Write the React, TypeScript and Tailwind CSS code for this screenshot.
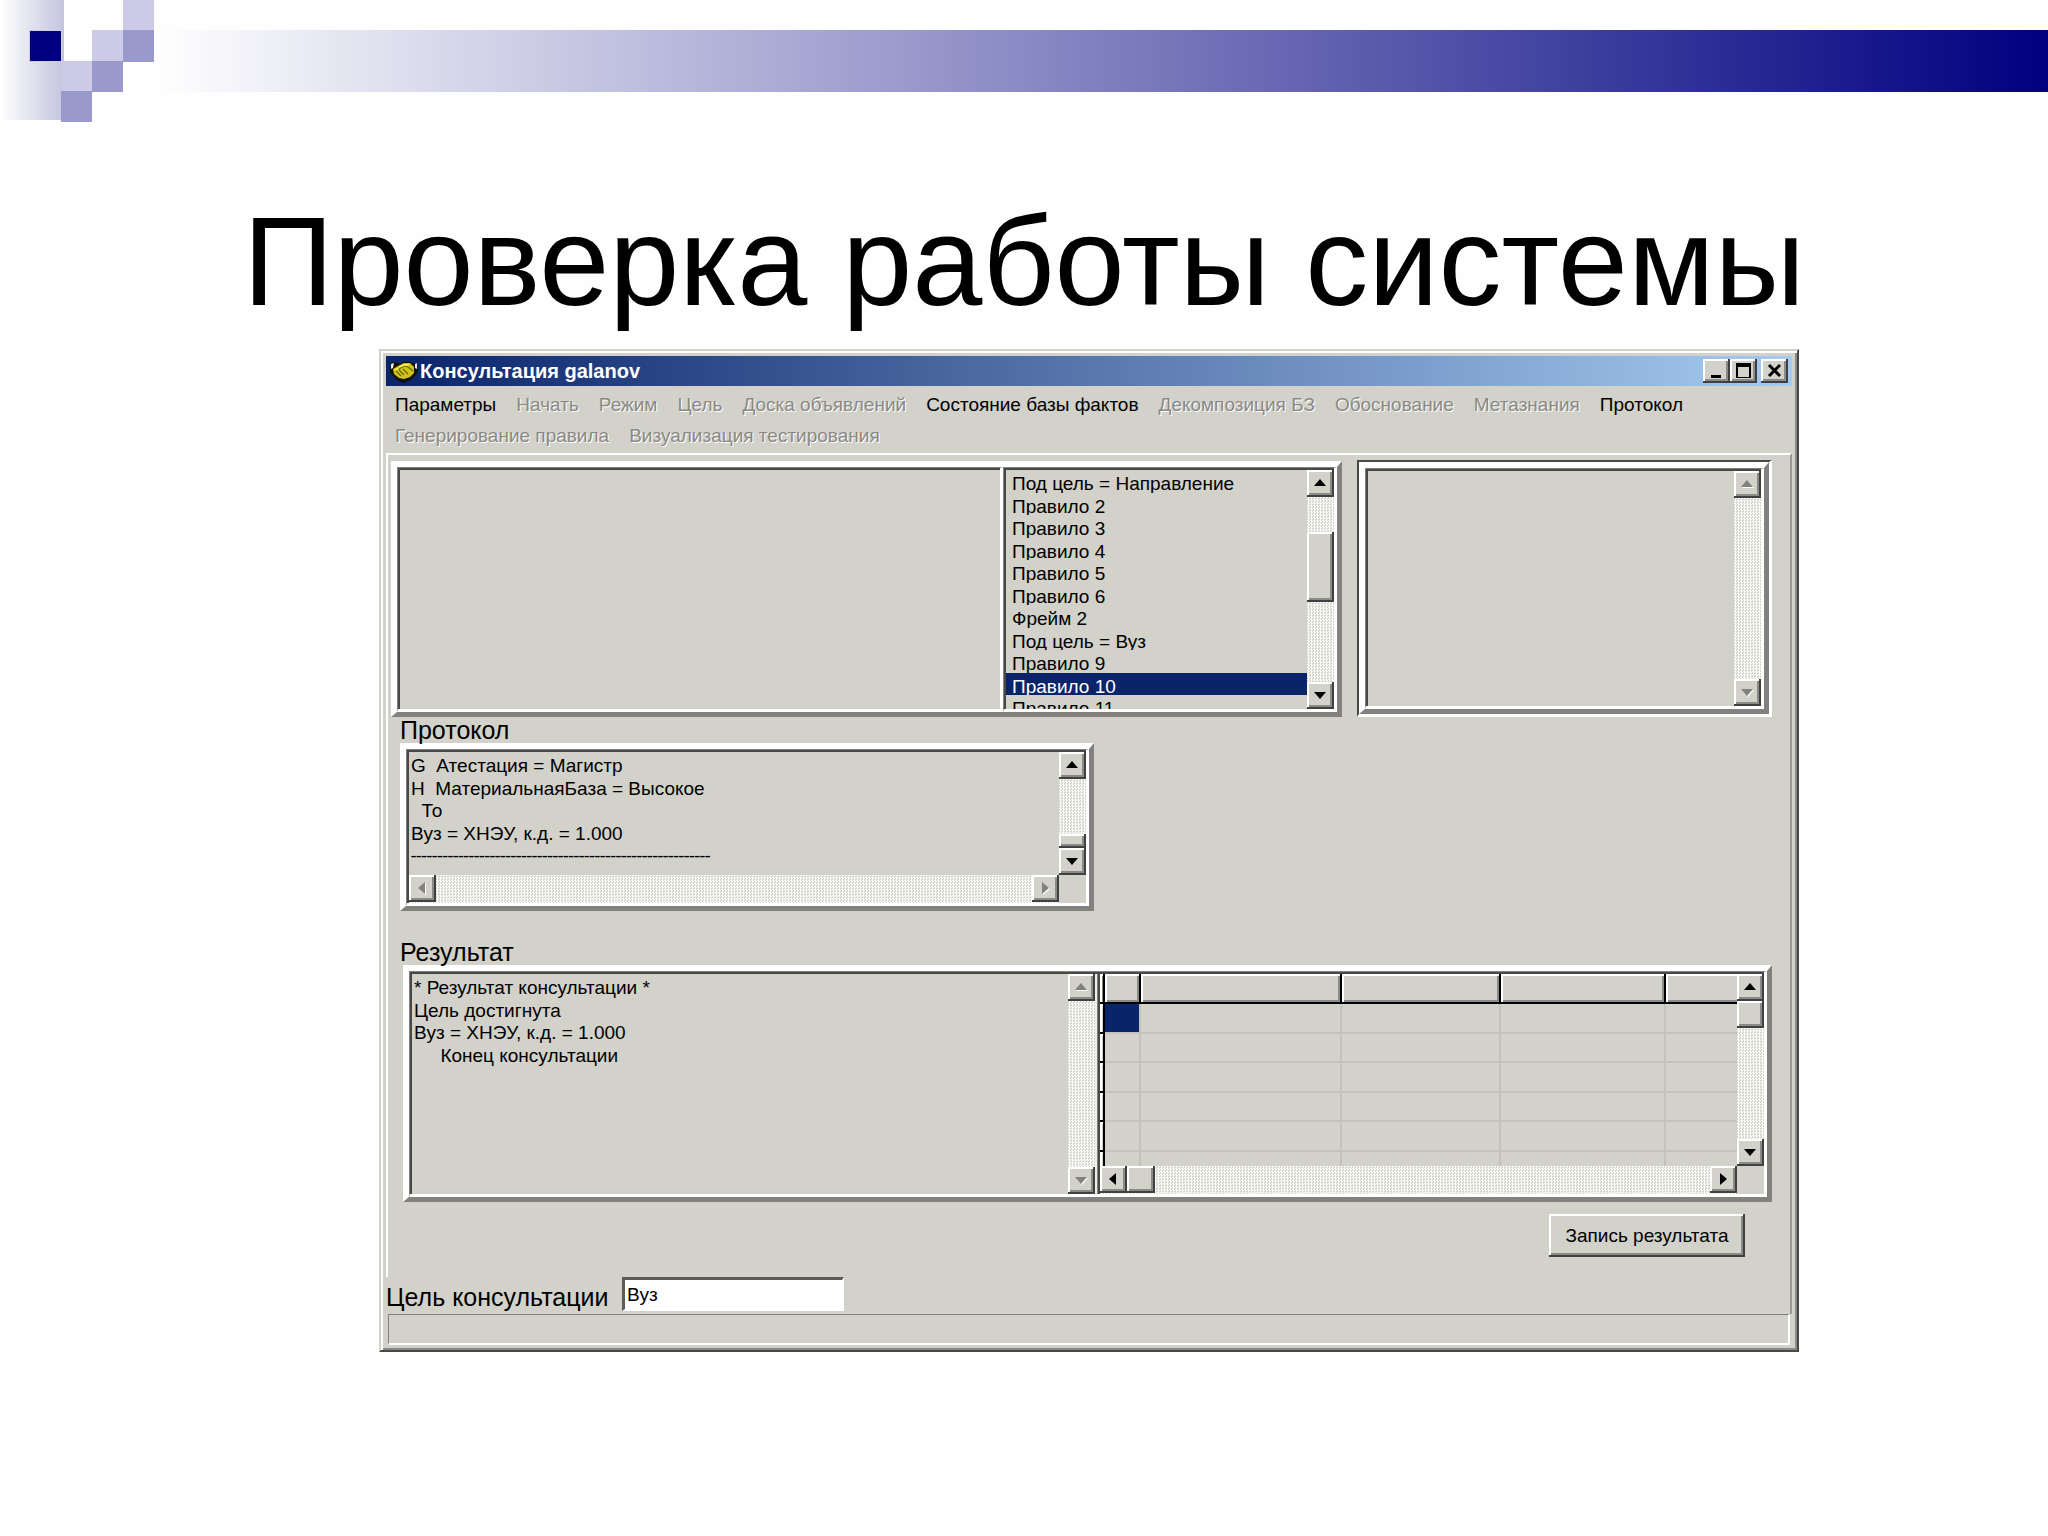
import type { ReactNode } from "react";

// ── Types ───────────────────────────────────────────────────────────────────

type Direction = "up" | "down" | "left" | "right";

interface MenuItem {
  label: string;
  disabled?: boolean;
}

// ── Data ────────────────────────────────────────────────────────────────────

const MENU: MenuItem[] = [
  { label: "Параметры" },
  { label: "Начать", disabled: true },
  { label: "Режим", disabled: true },
  { label: "Цель", disabled: true },
  { label: "Доска объявлений", disabled: true },
  { label: "Состояние базы фактов" },
  { label: "Декомпозиция БЗ", disabled: true },
  { label: "Обоснование", disabled: true },
  { label: "Метазнания", disabled: true },
  { label: "Протокол" },
  { label: "Генерирование правила", disabled: true },
  { label: "Визуализация тестирования", disabled: true },
];

const RULES = [
  "Под цель = Направление",
  "Правило 2",
  "Правило 3",
  "Правило 4",
  "Правило 5",
  "Правило 6",
  "Фрейм 2",
  "Под цель = Вуз",
  "Правило 9",
  "Правило 10",
  "Правило 11",
];

const SELECTED_RULE = "Правило 10";

const PROTOCOL = [
  "G  Атестация = Магистр",
  "H  МатериальнаяБаза = Высокое",
  "  То",
  "Вуз = ХНЭУ, к.д. = 1.000",
];

const RESULT = [
  "* Результат консультации *",
  "Цель достигнута",
  "Вуз = ХНЭУ, к.д. = 1.000",
  "     Конец консультации",
];

const ARROWS: Record<Direction, string> = {
  up: "M6 2 L12 9 H0 Z",
  down: "M0 3 H12 L6 10 Z",
  left: "M9 0 V12 L2 6 Z",
  right: "M3 0 L10 6 L3 12 Z",
};

const ARROW_LABELS: Record<Direction, string> = {
  up: "Вверх",
  down: "Вниз",
  left: "Влево",
  right: "Вправо",
};

const RAISED =
  "bg-[#d2d1ca] shadow-[inset_-2px_-2px_0_#404040,inset_2px_2px_0_#ffffff,inset_-4px_-4px_0_#8a8a86]";

const TRACK =
  "bg-[repeating-conic-gradient(#fbfbf8_0_25%,#d4d3cc_0_50%)] bg-[length:3px_3px]";

// ── Bevels ──────────────────────────────────────────────────────────────────

function Frame({ className = "", children }: { className?: string; children: ReactNode }) {
  return (
    <div
      className={`flex border-t-[6px] border-l-[6px] border-r-[5px] border-b-[5px] border-t-white border-l-white border-r-[#82817d] border-b-[#82817d] ${className}`}
    >
      {children}
    </div>
  );
}

function Sunken({ className = "", children }: { className?: string; children?: ReactNode }) {
  return (
    <div className={`flex border-t border-l border-r-[3px] border-b-[3px] border-t-[#82817d] border-l-[#82817d] border-r-white border-b-white ${className}`}>
      <div className="flex min-w-0 flex-1 border-t-2 border-l-2 border-[#484846]">{children}</div>
    </div>
  );
}

// ── Scroll bars ─────────────────────────────────────────────────────────────

function ArrowButton({ dir, disabled = false }: { dir: Direction; disabled?: boolean }) {
  return (
    <button
      type="button"
      disabled={disabled}
      aria-label={ARROW_LABELS[dir]}
      className={`flex size-[27px] shrink-0 items-center justify-center ${RAISED}`}
    >
      <svg viewBox="0 0 13 13" className="size-[13px]">
        {disabled && <path d={ARROWS[dir]} fill="#ffffff" transform="translate(1 1)" />}
        <path d={ARROWS[dir]} fill={disabled ? "#82817d" : "#000000"} />
      </svg>
    </button>
  );
}

function VScroll({ disabled = false, children }: { disabled?: boolean; children?: ReactNode }) {
  return (
    <div className={`flex w-[27px] shrink-0 flex-col ${TRACK}`}>
      <ArrowButton dir="up" disabled={disabled} />
      <div className="flex flex-1 flex-col">{children}</div>
      <ArrowButton dir="down" disabled={disabled} />
    </div>
  );
}

function HScroll({ disabled = false, children }: { disabled?: boolean; children?: ReactNode }) {
  return (
    <div className="flex h-[28px] shrink-0">
      <div className={`flex flex-1 ${TRACK}`}>
        <ArrowButton dir="left" disabled={disabled} />
        <div className="flex flex-1">{children}</div>
        <ArrowButton dir="right" disabled={disabled} />
      </div>
      <div className="w-[27px]" />
    </div>
  );
}

// ── Slide decoration ────────────────────────────────────────────────────────

function SlideHeader() {
  return (
    <header className="flex h-[122px] items-start">
      <svg viewBox="0 0 154 122" className="h-[122px] w-[154px] shrink-0">
        <defs>
          <linearGradient id="fade" x1="0" x2="1" y1="0" y2="0">
            <stop offset="0" stopColor="#ffffff" />
            <stop offset="1" stopColor="#c4c4de" />
          </linearGradient>
        </defs>
        <rect x="0" y="0" width="64" height="120" fill="url(#fade)" />
        <rect x="29" y="30" width="33" height="32" fill="#cccce6" />
        <rect x="30" y="31" width="31" height="30" fill="#000080" />
        <rect x="123" y="0" width="31" height="30" fill="#cccae6" />
        <rect x="92" y="30" width="31" height="31" fill="#cccae6" />
        <rect x="62" y="61" width="30" height="31" fill="#cccae6" />
        <rect x="123" y="30" width="31" height="32" fill="#9999cc" />
        <rect x="92" y="61" width="31" height="31" fill="#9999cc" />
        <rect x="61" y="91" width="31" height="31" fill="#9999cc" />
      </svg>
      <div className="mt-[30px] h-[62px] flex-1 bg-linear-to-r/srgb from-white to-[#000080]" />
    </header>
  );
}

// ── Window chrome ───────────────────────────────────────────────────────────

function HandshakeIcon() {
  return (
    <svg viewBox="0 0 28 24" className="h-[24px] w-[28px] shrink-0">
      <path d="M1 4 L5 3 L10 5 L14 3 L20 3 L24 5 L27 3 L28 12 L25 17 L21 21 L14 24 L8 22 L3 17 L0 13 Z" fill="#12120a" />
      <path d="M1 5 L4 4 L3 9 L1 10 Z M25 5 L27 4 L27 10 L25 9 Z" fill="#e8e8e0" />
      <path d="M3 10 L8 7 L14 4 L20 4 L24 8 L24 14 L20 18 L14 20 L9 19 L4 15 Z" fill="#cfc41a" />
      <path d="M9 10 L14 7 L18 8 L23 12 M6 12 L11 17 M9 11 L14 16 M13 10 L18 15" fill="none" stroke="#6a640c" strokeWidth="1.2" />
      <path d="M9 8 L14 6 L19 6 M5 11 L8 9" fill="none" stroke="#fff65a" strokeWidth="1.4" />
    </svg>
  );
}

function TitleBar() {
  const button = `flex h-[24px] w-[27px] items-center justify-center ${RAISED}`;
  return (
    <div className="flex h-[30px] items-center bg-linear-to-r/srgb from-[#0a246a] to-[#a6caf0] pr-1 pl-1">
      <HandshakeIcon />
      <h2 className="ml-0.5 flex-1 text-[20px] leading-[30px] font-bold text-white">Консультация galanov</h2>
      <button type="button" aria-label="Свернуть" className={button}>
        <svg viewBox="0 0 17 16" className="h-[16px] w-[17px]">
          <rect x="3" y="12" width="10" height="3" />
        </svg>
      </button>
      <button type="button" aria-label="Развернуть" className={button}>
        <svg viewBox="0 0 17 16" className="h-[16px] w-[17px]">
          <path d="M1 0 H16 V15 H1 Z M3 4 V14 H14 V4 Z" fillRule="evenodd" />
        </svg>
      </button>
      <button type="button" aria-label="Закрыть" className={`ml-1 ${button}`}>
        <svg viewBox="0 0 17 16" className="h-[16px] w-[17px]">
          <path d="M3 2 L14 13 M14 2 L3 13" stroke="#000000" strokeWidth="3" />
        </svg>
      </button>
    </div>
  );
}

function MenuBar() {
  return (
    <nav className="flex flex-wrap gap-x-[20px] pt-[3px] pr-[60px] pb-[2px] pl-[9px]">
      {MENU.map((item) => (
        <button
          key={item.label}
          type="button"
          disabled={item.disabled}
          className={[
            "text-[19px] leading-[31px] whitespace-nowrap",
            item.disabled ? "text-[#8a8984] [text-shadow:1px_1px_0_#ffffff]" : "text-black",
          ].join(" ")}
        >
          {item.label}
        </button>
      ))}
    </nav>
  );
}

// ── Panels ──────────────────────────────────────────────────────────────────

function RulesPanel() {
  return (
    <Frame className="h-[256px] min-w-0 flex-1">
      <Sunken className="min-w-0 flex-1" />
      <Sunken className="w-[334px] shrink-0">
        <div className="min-w-0 flex-1 overflow-hidden">
          <ul role="listbox" aria-label="Правила" className="flex h-[248px] flex-col">
            {RULES.map((rule) => (
              <li
                key={rule}
                role="option"
                aria-selected={rule === SELECTED_RULE}
                className={[
                  "min-h-0 flex-1 overflow-hidden pl-[6px] text-[19px] leading-[28px] whitespace-nowrap",
                  rule === SELECTED_RULE ? "bg-[#0a246a] text-white" : "",
                ].join(" ")}
              >
                {rule}
              </li>
            ))}
          </ul>
        </div>
        <VScroll>
          <div className={`mt-[35px] h-[70px] ${RAISED}`} />
        </VScroll>
      </Sunken>
    </Frame>
  );
}

function EmptyPanel() {
  return (
    <div className="flex h-[257px] w-[415px] shrink-0 border-t-2 border-l-2 border-r-[3px] border-b-[3px] border-t-[#484846] border-l-[#484846] border-r-white border-b-white">
      <Frame className="flex-1">
        <Sunken className="flex-1">
          <div className="flex-1" />
          <VScroll disabled />
        </Sunken>
      </Frame>
    </div>
  );
}

function ProtocolPanel() {
  return (
    <Frame className="ml-[12px] h-[168px] w-[694px]">
      <Sunken className="flex-1">
        <div className="flex min-w-0 flex-1 flex-col">
          <div className="flex min-h-0 flex-1">
            <div role="log" aria-labelledby="protocol" className="flex-1 overflow-hidden pt-[3px] pl-[2px]">
              <div className="flex h-[113px] flex-col">
                {PROTOCOL.map((line) => (
                  <p key={line} className="min-h-0 flex-1 text-[19px] leading-[22px] whitespace-pre">
                    {line}
                  </p>
                ))}
                <p className="min-h-0 flex-1 font-[Roboto,sans-serif] text-[19px] leading-[22px] whitespace-pre">
                  {"-".repeat(57)}
                </p>
              </div>
            </div>
            <VScroll>
              <div className={`mt-auto h-[14px] ${RAISED}`} />
            </VScroll>
          </div>
          <HScroll disabled />
        </div>
      </Sunken>
    </Frame>
  );
}

function ResultGrid() {
  const head = "border-r-2 border-b-2 border-black p-0 shadow-[inset_2px_2px_0_#ffffff,inset_-2px_-2px_0_#8a8a86]";
  const cell = "border-r-2 border-b-2 border-[#c3c2bc] p-0";
  return (
    <div className="flex w-[667px] shrink-0 border-l border-[#82817d]">
      <div className="flex min-w-0 flex-1 flex-col border-l-2 border-[#484846]">
        <div className="flex min-h-0 flex-1">
          <div className="min-w-0 flex-1 overflow-hidden">
            <table aria-label="Таблица результатов" className="h-[207px] w-full table-fixed border-separate border-spacing-0">
              <colgroup>
                <col className="w-[5px]" />
                <col className="w-[36px]" />
                <col className="w-[201px]" />
                <col className="w-[159px]" />
                <col className="w-[165px]" />
                <col />
              </colgroup>
              <thead>
                <tr className="h-[30px]">
                  <th className={head} />
                  <th className={head} />
                  <th className={head} />
                  <th className={head} />
                  <th className={head} />
                  <th className="border-b-2 border-black p-0 shadow-[inset_2px_2px_0_#ffffff,inset_0_-2px_0_#8a8a86]" />
                </tr>
              </thead>
              <tbody>
                {[0, 1, 2, 3, 4, 5].map((row) => (
                  <tr key={row}>
                    <td className="border-r-2 border-b-2 border-black p-0 shadow-[inset_2px_2px_0_#ffffff]" />
                    <td className={`${cell} ${row === 0 ? "bg-[#0a246a]" : ""}`} />
                    <td className={cell} />
                    <td className={cell} />
                    <td className={cell} />
                    <td className="border-b-2 border-[#c3c2bc] p-0" />
                  </tr>
                ))}
              </tbody>
            </table>
          </div>
          <VScroll>
            <div className={`h-[27px] ${RAISED}`} />
          </VScroll>
        </div>
        <HScroll>
          <div className={`h-[27px] w-[28px] ${RAISED}`} />
        </HScroll>
      </div>
    </div>
  );
}

function ResultPanel() {
  return (
    <Frame className="mr-[18px] ml-[15px] h-[237px]">
      <Sunken className="min-w-0 flex-1">
        <div role="log" aria-labelledby="result" className="min-w-0 flex-1 overflow-hidden pt-[3px] pl-[2px]">
          <div className="flex h-[90px] flex-col">
            {RESULT.map((line) => (
              <p key={line} className="min-h-0 flex-1 text-[19px] leading-[22px] whitespace-pre">
                {line}
              </p>
            ))}
          </div>
        </div>
        <VScroll disabled />
        <div className="flex border-l-2 border-[#eeeeea]">
          <ResultGrid />
        </div>
      </Sunken>
    </Frame>
  );
}

// ── Page ────────────────────────────────────────────────────────────────────

export default function App() {
  return (
    <div className="min-h-screen bg-[#fefefe] font-['Liberation_Sans',Arial,sans-serif] text-black">
      <SlideHeader />
      <h1 className="mt-[68px] text-center text-[126px] leading-[144px] whitespace-nowrap">
        Проверка работы системы
      </h1>

      <main className="mt-[15px] mr-[249px] ml-[379px] border-2 border-t-[#d2d1ca] border-l-[#d2d1ca] border-r-[#484846] border-b-[#484846] bg-[#d2d1ca] p-[5px] shadow-[inset_2px_2px_0_#ffffff,inset_-2px_-2px_0_#8a8a86]">
        <TitleBar />
        <MenuBar />

        <section className="border-t-2 border-r-2 border-l-2 border-t-white border-r-[#9a9994] border-l-white pb-[20px]">
          <div className="flex items-end gap-[15px] pt-[5px] pr-[18px] pl-[3px]">
            <RulesPanel />
            <EmptyPanel />
          </div>

          <h3 id="protocol" className="pl-[12px] text-[25px] leading-[26px]">Протокол</h3>
          <ProtocolPanel />

          <h3 id="result" className="mt-[28px] pl-[12px] text-[25px] leading-[26px]">Результат</h3>
          <ResultPanel />

          <div className="mt-[12px] mr-[45px] flex justify-end">
            <button type="button" className={`h-[43px] w-[196px] text-[19px] leading-[22px] ${RAISED}`}>
              Запись результата
            </button>
          </div>
        </section>

        <div className="flex items-end border-r-2 border-[#9a9994] pb-[3px]">
          <label htmlFor="goal" className="w-[236px] text-[25px] leading-[28px]">Цель консультации</label>
          <input
            id="goal"
            type="text"
            defaultValue="Вуз"
            className="h-[34px] w-[222px] border-t-[3px] border-l-[3px] border-r-2 border-b-2 border-t-[#5c5b58] border-l-[#5c5b58] border-r-white border-b-white bg-white pl-[2px] text-[19px] leading-[22px] outline-none"
          />
        </div>

        <footer className="mx-[2px] h-[31px] border border-r-2 border-b-2 border-t-[#82817d] border-l-[#82817d] border-r-white border-b-white" />
      </main>
    </div>
  );
}
